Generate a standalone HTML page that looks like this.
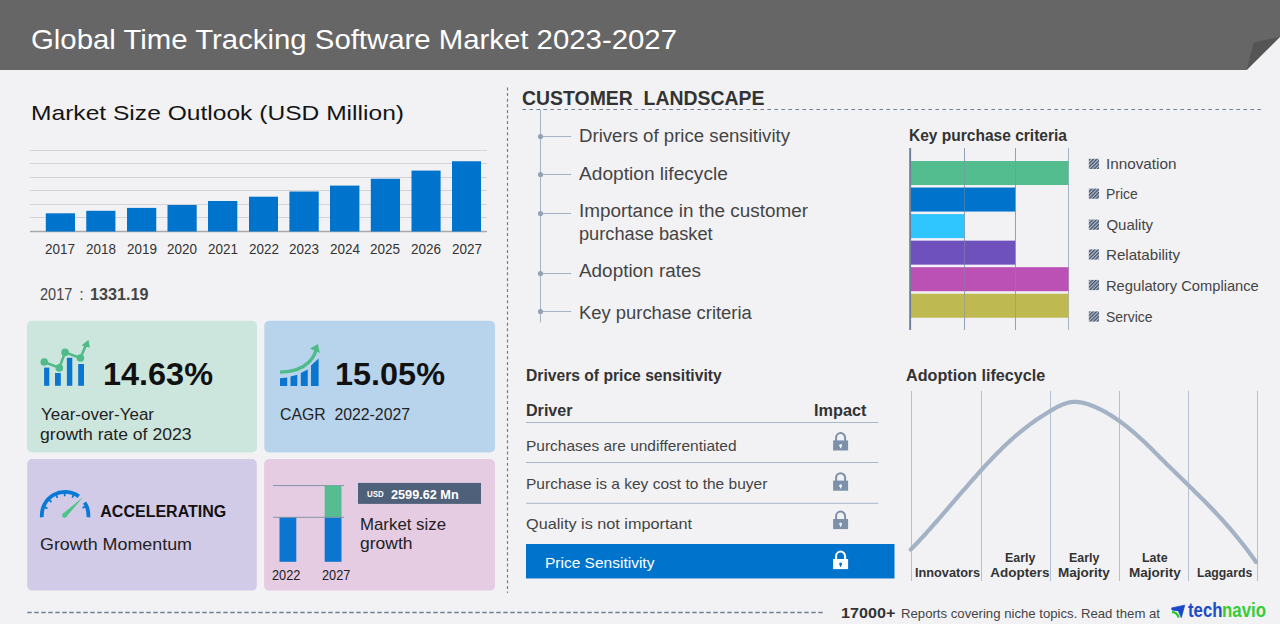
<!DOCTYPE html>
<html><head><meta charset="utf-8"><title>Global Time Tracking Software Market 2023-2027</title>
<style>
html,body{margin:0;padding:0;}
body{width:1280px;height:624px;overflow:hidden;position:relative;background:#f2f2f4;font-family:"Liberation Sans", sans-serif;}
.t{position:absolute;white-space:pre;line-height:1.117em;transform-origin:0 0;}
.a{position:absolute;}
</style></head><body>
<svg class="a" style="left:0;top:0" width="1280" height="624" viewBox="0 0 1280 624">
<defs><pattern id="hatch" patternUnits="userSpaceOnUse" width="2.5" height="2.5" patternTransform="rotate(-45)"><rect width="2.5" height="2.5" fill="#b3c3d8"/><rect width="2.5" height="1.3" fill="#434d5e"/></pattern></defs>
<polygon points="0,0 1280,0 1280,36.8 1246.6,70 0,70" fill="#666666"/>
<polygon points="1246.6,70 1253.8,42.5 1280,36.8" fill="#555555"/>
<line x1="30" y1="150.5" x2="487" y2="150.5" stroke="#d3d3d6" stroke-width="1"/>
<line x1="30" y1="163.5" x2="487" y2="163.5" stroke="#d3d3d6" stroke-width="1"/>
<line x1="30" y1="177.5" x2="487" y2="177.5" stroke="#d3d3d6" stroke-width="1"/>
<line x1="30" y1="190.5" x2="487" y2="190.5" stroke="#d3d3d6" stroke-width="1"/>
<line x1="30" y1="204.5" x2="487" y2="204.5" stroke="#d3d3d6" stroke-width="1"/>
<line x1="30" y1="217.5" x2="487" y2="217.5" stroke="#d3d3d6" stroke-width="1"/>
<line x1="30" y1="231.5" x2="487" y2="231.5" stroke="#a9a9ab" stroke-width="1.3"/>
<rect x="45.8" y="213.3" width="29.20" height="18.20" fill="#0074cc"/>
<rect x="86.25" y="210.8" width="29.15" height="20.70" fill="#0074cc"/>
<rect x="127" y="207.9" width="29.25" height="23.60" fill="#0074cc"/>
<rect x="167.5" y="205" width="29.20" height="26.50" fill="#0074cc"/>
<rect x="208" y="201" width="29.30" height="30.50" fill="#0074cc"/>
<rect x="249" y="196.7" width="29.00" height="34.80" fill="#0074cc"/>
<rect x="289.4" y="191.5" width="29.35" height="40.00" fill="#0074cc"/>
<rect x="330" y="185.6" width="29.40" height="45.90" fill="#0074cc"/>
<rect x="370.8" y="178.75" width="29.20" height="52.75" fill="#0074cc"/>
<rect x="411.5" y="170.6" width="29.10" height="60.90" fill="#0074cc"/>
<rect x="452" y="161.25" width="29.00" height="70.25" fill="#0074cc"/>
<rect x="27" y="320.8" width="230" height="131.7" rx="5" fill="#cde6dd"/>
<rect x="264.3" y="320.8" width="230.7" height="131.7" rx="5" fill="#b8d4ec"/>
<rect x="27.2" y="459" width="229.6" height="131.6" rx="5" fill="#d2cbe8"/>
<rect x="264.1" y="459" width="230.9" height="131.6" rx="5" fill="#e6cce3"/>
<rect x="44.1" y="367.6" width="5.20" height="18.20" fill="#0a76d0"/>
<rect x="55" y="373" width="5.80" height="12.80" fill="#0a76d0"/>
<rect x="66.9" y="357.8" width="5.40" height="28.00" fill="#0a76d0"/>
<rect x="78.2" y="364" width="5.80" height="21.80" fill="#0a76d0"/>
<polyline points="44.25,362 59.3,367.9 65.1,352.4 80.4,358 86,345" fill="none" stroke="#50bb8a" stroke-width="2.6" stroke-linejoin="round"/>
<circle cx="44.25" cy="362" r="3.8" fill="#50bb8a"/>
<circle cx="59.3" cy="367.9" r="3.8" fill="#50bb8a"/>
<circle cx="65.1" cy="352.4" r="3.8" fill="#50bb8a"/>
<circle cx="80.4" cy="358" r="3.8" fill="#50bb8a"/>
<polygon points="88.5,339.8 81.5,345.5 89.8,347.8" fill="#50bb8a"/>
<polygon points="280,378.2 287.2,377.6 287.2,385.9 280,385.9" fill="#0a76d0"/>
<polygon points="290.5,376.5 297.3,374.7 297.3,385.9 290.5,385.9" fill="#0a76d0"/>
<polygon points="300.8,373 307.75,369.5 307.75,385.9 300.8,385.9" fill="#0a76d0"/>
<polygon points="311,365.5 318.6,358.4 318.6,385.9 311,385.9" fill="#0a76d0"/>
<path d="M280,372.2 C292,372 303,368 309,362 C313,358 315,354 316,350" fill="none" stroke="#50bb8a" stroke-width="3.2"/>
<polygon points="317.9,344 310,348.4 319.8,353" fill="#50bb8a"/>
<path d="M41.89,517.23 A23.3,23.3 0 0 1 78.80,496.35" fill="none" stroke="#0a78d6" stroke-width="3.8"/>
<path d="M84.64,502.51 A23.3,23.3 0 0 1 88.31,517.23" fill="none" stroke="#0a78d6" stroke-width="3.8"/>
<line x1="44.28" y1="507.21" x2="47.46" y2="508.43" stroke="#0a78d6" stroke-width="1.8"/>
<line x1="49.06" y1="499.71" x2="51.50" y2="502.07" stroke="#0a78d6" stroke-width="1.8"/>
<line x1="56.03" y1="494.83" x2="57.41" y2="497.93" stroke="#0a78d6" stroke-width="1.8"/>
<line x1="64.71" y1="492.90" x2="64.77" y2="496.30" stroke="#0a78d6" stroke-width="1.8"/>
<line x1="73.63" y1="494.60" x2="72.33" y2="497.74" stroke="#0a78d6" stroke-width="1.8"/>
<line x1="85.63" y1="506.49" x2="82.50" y2="507.82" stroke="#0a78d6" stroke-width="1.8"/>
<polygon points="83.1,497.1 63,513.6 66.2,517" fill="#4fc48a"/><circle cx="64.5" cy="515.4" r="2.4" fill="#4fc48a"/>
<line x1="273" y1="485.6" x2="344" y2="485.6" stroke="#8494a8" stroke-width="1"/>
<rect x="279.5" y="517.3" width="16.8" height="44.5" fill="#0a76d0"/>
<rect x="324.7" y="485.6" width="16.8" height="31.7" fill="#55bd8f"/>
<rect x="324.7" y="517.3" width="16.8" height="44.5" fill="#0a76d0"/>
<line x1="273" y1="517.3" x2="344" y2="517.3" stroke="#8494a8" stroke-width="1"/>
<rect x="358" y="482.9" width="123" height="21" fill="#4f617a"/>
<line x1="507.5" y1="87.5" x2="507.5" y2="593" stroke="#6f7f96" stroke-width="1.2" stroke-dasharray="3 2.6"/>
<line x1="522.4" y1="109.5" x2="1262" y2="109.5" stroke="#6f7f96" stroke-width="1.2" stroke-dasharray="3.6 3.4"/>
<line x1="27.3" y1="612.5" x2="823" y2="612.5" stroke="#6f7f96" stroke-width="1.4" stroke-dasharray="4.4 2.6"/>
<line x1="540.5" y1="109.5" x2="540.5" y2="322.5" stroke="#a6b3c4" stroke-width="1"/>
<line x1="540.5" y1="136.5" x2="571.2" y2="136.5" stroke="#a6b3c4" stroke-width="1"/>
<circle cx="540.5" cy="136.5" r="2.6" fill="#94a2b6"/>
<line x1="540.5" y1="174.5" x2="571.2" y2="174.5" stroke="#a6b3c4" stroke-width="1"/>
<circle cx="540.5" cy="174.5" r="2.6" fill="#94a2b6"/>
<line x1="540.5" y1="213.5" x2="571.2" y2="213.5" stroke="#a6b3c4" stroke-width="1"/>
<circle cx="540.5" cy="213.5" r="2.6" fill="#94a2b6"/>
<line x1="540.5" y1="273.5" x2="571.2" y2="273.5" stroke="#a6b3c4" stroke-width="1"/>
<circle cx="540.5" cy="273.5" r="2.6" fill="#94a2b6"/>
<line x1="540.5" y1="311.5" x2="571.2" y2="311.5" stroke="#a6b3c4" stroke-width="1"/>
<circle cx="540.5" cy="311.5" r="2.6" fill="#94a2b6"/>
<line x1="964.5" y1="148" x2="964.5" y2="330" stroke="#a6b3c4" stroke-width="1"/>
<line x1="1015.5" y1="148" x2="1015.5" y2="330" stroke="#a6b3c4" stroke-width="1"/>
<line x1="1068.5" y1="148" x2="1068.5" y2="330" stroke="#a6b3c4" stroke-width="1"/>
<rect x="911" y="161.00" width="157.50" height="24" fill="#54bd8f"/>
<rect x="911" y="187.55" width="104.20" height="24" fill="#0074cc"/>
<rect x="911" y="214.10" width="53.40" height="24" fill="#2fc5ff"/>
<rect x="911" y="240.65" width="104.20" height="24" fill="#6f51be"/>
<rect x="911" y="267.20" width="157.50" height="24" fill="#bb50b5"/>
<rect x="911" y="293.75" width="157.50" height="24" fill="#bfb951"/>
<line x1="964.5" y1="148" x2="964.5" y2="330" stroke="#7f8fa6" stroke-width="0.9" opacity="0.55"/>
<line x1="1015.5" y1="148" x2="1015.5" y2="330" stroke="#7f8fa6" stroke-width="0.9" opacity="0.55"/>
<rect x="909.2" y="148" width="1.9" height="182" fill="#6e7f98"/>
<rect x="1088.8" y="158.8" width="10.2" height="10.2" fill="url(#hatch)"/>
<rect x="1088.8" y="188.6" width="10.2" height="10.2" fill="url(#hatch)"/>
<rect x="1088.8" y="219.6" width="10.2" height="10.2" fill="url(#hatch)"/>
<rect x="1088.8" y="249.4" width="10.2" height="10.2" fill="url(#hatch)"/>
<rect x="1088.8" y="279.9" width="10.2" height="10.2" fill="url(#hatch)"/>
<rect x="1088.8" y="311.4" width="10.2" height="10.2" fill="url(#hatch)"/>
<line x1="526" y1="422.5" x2="878.3" y2="422.5" stroke="#a9b7ca" stroke-width="1"/>
<line x1="526" y1="462.5" x2="878.3" y2="462.5" stroke="#a9b7ca" stroke-width="1"/>
<line x1="526" y1="503.3" x2="878.3" y2="503.3" stroke="#a9b7ca" stroke-width="1"/>
<rect x="526" y="544" width="368.5" height="34.5" fill="#0074cc"/>
<path d="M836.10,440.90 V437.60 A4.5,4.6 0 0 1 845.10,437.60 V440.90" fill="none" stroke="#7d90aa" stroke-width="2.0"/><rect x="833.10" y="440.40" width="15" height="10.1" fill="#7d90aa"/><circle cx="840.60" cy="445.50" r="1.5" fill="#f2f2f4"/><rect x="840.00" y="445.40" width="1.2" height="2.8" fill="#f2f2f4"/>
<path d="M836.10,481.10 V477.80 A4.5,4.6 0 0 1 845.10,477.80 V481.10" fill="none" stroke="#7d90aa" stroke-width="2.0"/><rect x="833.10" y="480.60" width="15" height="10.1" fill="#7d90aa"/><circle cx="840.60" cy="485.70" r="1.5" fill="#f2f2f4"/><rect x="840.00" y="485.60" width="1.2" height="2.8" fill="#f2f2f4"/>
<path d="M836.10,519.50 V516.20 A4.5,4.6 0 0 1 845.10,516.20 V519.50" fill="none" stroke="#7d90aa" stroke-width="2.0"/><rect x="833.10" y="519.00" width="15" height="10.1" fill="#7d90aa"/><circle cx="840.60" cy="524.10" r="1.5" fill="#f2f2f4"/><rect x="840.00" y="524.00" width="1.2" height="2.8" fill="#f2f2f4"/>
<path d="M836.10,559.50 V556.20 A4.5,4.6 0 0 1 845.10,556.20 V559.50" fill="none" stroke="#ffffff" stroke-width="2.0"/><rect x="833.10" y="559.00" width="15" height="10.1" fill="#ffffff"/><circle cx="840.60" cy="564.10" r="1.5" fill="#0074cc"/><rect x="840.00" y="564.00" width="1.2" height="2.8" fill="#0074cc"/>
<line x1="911.5" y1="390.8" x2="911.5" y2="581" stroke="#b5c1d0" stroke-width="1"/>
<line x1="981.5" y1="390.8" x2="981.5" y2="581" stroke="#b5c1d0" stroke-width="1"/>
<line x1="1050.5" y1="390.8" x2="1050.5" y2="581" stroke="#b5c1d0" stroke-width="1"/>
<line x1="1119.5" y1="390.8" x2="1119.5" y2="581" stroke="#b5c1d0" stroke-width="1"/>
<line x1="1188.5" y1="390.8" x2="1188.5" y2="581" stroke="#b5c1d0" stroke-width="1"/>
<line x1="1257.5" y1="390.8" x2="1257.5" y2="581" stroke="#b5c1d0" stroke-width="1"/>
<path d="M910.80,549.55 L912.73,547.57 L914.66,545.56 L916.59,543.54 L918.51,541.49 L920.44,539.42 L922.37,537.33 L924.30,535.22 L926.23,533.10 L928.16,530.96 L930.08,528.80 L932.01,526.63 L933.94,524.45 L935.87,522.26 L937.80,520.05 L939.73,517.84 L941.66,515.62 L943.58,513.39 L945.51,511.16 L947.44,508.92 L949.37,506.68 L951.30,504.44 L953.23,502.19 L955.16,499.95 L957.08,497.70 L959.01,495.46 L960.94,493.22 L962.87,490.99 L964.80,488.76 L966.73,486.54 L968.65,484.33 L970.58,482.12 L972.51,479.93 L974.44,477.74 L976.37,475.57 L978.30,473.42 L980.23,471.27 L982.15,469.15 L984.08,467.04 L986.01,464.94 L987.94,462.87 L989.87,460.82 L991.80,458.79 L993.73,456.78 L995.65,454.80 L997.58,452.84 L999.51,450.91 L1001.44,449.00 L1003.37,447.12 L1005.30,445.27 L1007.22,443.46 L1009.15,441.67 L1011.08,439.92 L1013.01,438.20 L1014.94,436.51 L1016.87,434.86 L1018.80,433.24 L1020.72,431.65 L1022.65,430.09 L1024.58,428.57 L1026.51,427.07 L1028.44,425.60 L1030.37,424.17 L1032.29,422.76 L1034.22,421.38 L1036.15,420.03 L1038.08,418.70 L1040.01,417.41 L1041.94,416.14 L1043.87,414.90 L1045.79,413.68 L1047.72,412.49 L1049.65,411.32 L1051.58,410.18 L1053.51,409.07 L1055.44,407.99 L1057.37,406.98 L1059.29,406.02 L1061.22,405.14 L1063.15,404.33 L1065.08,403.63 L1067.01,403.02 L1068.94,402.53 L1070.86,402.17 L1072.79,401.94 L1074.72,401.85 L1076.65,401.89 L1078.58,402.05 L1080.51,402.31 L1082.44,402.68 L1084.36,403.14 L1086.29,403.69 L1088.22,404.30 L1090.15,404.99 L1092.08,405.72 L1094.01,406.51 L1095.94,407.34 L1097.86,408.22 L1099.79,409.14 L1101.72,410.11 L1103.65,411.13 L1105.58,412.19 L1107.51,413.29 L1109.43,414.44 L1111.36,415.63 L1113.29,416.86 L1115.22,418.14 L1117.15,419.45 L1119.08,420.81 L1121.01,422.21 L1122.93,423.65 L1124.86,425.12 L1126.79,426.64 L1128.72,428.19 L1130.65,429.77 L1132.58,431.39 L1134.51,433.05 L1136.43,434.73 L1138.36,436.45 L1140.29,438.20 L1142.22,439.98 L1144.15,441.79 L1146.08,443.62 L1148.00,445.48 L1149.93,447.37 L1151.86,449.27 L1153.79,451.18 L1155.72,453.11 L1157.65,455.04 L1159.58,456.98 L1161.50,458.91 L1163.43,460.84 L1165.36,462.76 L1167.29,464.67 L1169.22,466.57 L1171.15,468.47 L1173.07,470.35 L1175.00,472.23 L1176.93,474.11 L1178.86,475.98 L1180.79,477.85 L1182.72,479.72 L1184.65,481.59 L1186.57,483.46 L1188.50,485.34 L1190.43,487.22 L1192.36,489.10 L1194.29,490.99 L1196.22,492.88 L1198.15,494.79 L1200.07,496.70 L1202.00,498.63 L1203.93,500.57 L1205.86,502.52 L1207.79,504.49 L1209.72,506.47 L1211.64,508.47 L1213.57,510.49 L1215.50,512.53 L1217.43,514.59 L1219.36,516.67 L1221.29,518.77 L1223.22,520.90 L1225.14,523.06 L1227.07,525.24 L1229.00,527.45 L1230.93,529.69 L1232.86,531.96 L1234.79,534.26 L1236.72,536.59 L1238.64,538.96 L1240.57,541.36 L1242.50,543.80 L1244.43,546.28 L1246.36,548.80 L1248.29,551.35 L1250.21,553.95 L1252.14,556.59 L1254.07,559.28 L1256.00,562.01" fill="none" stroke="#a3b2c5" stroke-width="4.2" stroke-linecap="round" stroke-linejoin="round"/>
<path d="M1171.7,607.9 L1184.7,605.2 L1181.3,617.6 L1178.4,610.9 L1171.9,609.9 Z" fill="#1a47c8" stroke="#1a47c8" stroke-width="0.8" stroke-linejoin="round"/>
<path d="M1172,611.8 Q1177.6,612.4 1178.6,617.6" fill="none" stroke="#25c92a" stroke-width="2.2"/>
</svg>
<div class="t" style="left:31.00px;top:25.46px;font-size:27.5px;color:#ffffff;transform:scaleX(1.0672);">Global Time Tracking Software Market 2023-2027</div>
<div class="t" style="left:31.00px;top:100.80px;font-size:21px;color:#151515;transform:scaleX(1.1708);">Market Size Outlook (USD Million)</div>
<div class="t" style="left:45.40px;top:242.03px;font-size:14px;color:#333;transform:scaleX(0.9629);">2017</div>
<div class="t" style="left:85.83px;top:242.03px;font-size:14px;color:#333;transform:scaleX(0.9629);">2018</div>
<div class="t" style="left:126.62px;top:242.03px;font-size:14px;color:#333;transform:scaleX(0.9629);">2019</div>
<div class="t" style="left:167.10px;top:242.03px;font-size:14px;color:#333;transform:scaleX(0.9629);">2020</div>
<div class="t" style="left:207.65px;top:242.03px;font-size:14px;color:#333;transform:scaleX(0.9629);">2021</div>
<div class="t" style="left:248.50px;top:242.03px;font-size:14px;color:#333;transform:scaleX(0.9629);">2022</div>
<div class="t" style="left:289.07px;top:242.03px;font-size:14px;color:#333;transform:scaleX(0.9629);">2023</div>
<div class="t" style="left:329.70px;top:242.03px;font-size:14px;color:#333;transform:scaleX(0.9629);">2024</div>
<div class="t" style="left:370.40px;top:242.03px;font-size:14px;color:#333;transform:scaleX(0.9629);">2025</div>
<div class="t" style="left:411.05px;top:242.03px;font-size:14px;color:#333;transform:scaleX(0.9629);">2026</div>
<div class="t" style="left:451.50px;top:242.03px;font-size:14px;color:#333;transform:scaleX(0.9629);">2027</div>
<div class="t" style="left:40.40px;top:286.32px;font-size:16px;color:#444;transform:scaleX(0.9075);">2017</div>
<div class="t" style="left:79.30px;top:286.32px;font-size:16px;color:#444;">:</div>
<div class="t" style="left:90.30px;top:286.32px;font-size:16px;color:#444;font-weight:700;transform:scaleX(1.0096);">1331.19</div>
<div class="t" style="left:103.20px;top:356.64px;font-size:32px;color:#111;font-weight:700;transform:scaleX(1.0135);">14.63%</div>
<div class="t" style="left:40.50px;top:405.72px;font-size:16px;color:#222;transform:scaleX(1.0617);">Year-over-Year</div>
<div class="t" style="left:40.30px;top:425.52px;font-size:16px;color:#222;transform:scaleX(1.0988);">growth rate of 2023</div>
<div class="t" style="left:334.60px;top:356.64px;font-size:32px;color:#111;font-weight:700;transform:scaleX(1.0135);">15.05%</div>
<div class="t" style="left:280.00px;top:406.12px;font-size:16px;color:#222;transform:scaleX(0.9875);">CAGR  2022-2027</div>
<div class="t" style="left:100.30px;top:502.92px;font-size:16px;color:#111;font-weight:700;">ACCELERATING</div>
<div class="t" style="left:39.90px;top:535.92px;font-size:16px;color:#222;transform:scaleX(1.1173);">Growth Momentum</div>
<div class="t" style="left:272.30px;top:567.73px;font-size:14px;color:#222;transform:scaleX(0.9115);">2022</div>
<div class="t" style="left:322.30px;top:567.73px;font-size:14px;color:#222;transform:scaleX(0.9115);">2027</div>
<div class="t" style="left:367.30px;top:489.20px;font-size:9.5px;color:#ffffff;font-weight:700;transform:scaleX(0.8274);">USD</div>
<div class="t" style="left:390.50px;top:489.04px;font-size:12px;color:#ffffff;font-weight:700;transform:scaleX(1.0570);">2599.62 Mn</div>
<div class="t" style="left:359.80px;top:515.01px;font-size:17px;color:#222;transform:scaleX(0.9894);">Market size</div>
<div class="t" style="left:359.80px;top:534.22px;font-size:17px;color:#222;transform:scaleX(1.0288);">growth</div>
<div class="t" style="left:522.30px;top:88.35px;font-size:19.5px;color:#333;font-weight:700;transform:scaleX(0.9962);">CUSTOMER  LANDSCAPE</div>
<div class="t" style="left:579.40px;top:126.31px;font-size:18px;color:#444;transform:scaleX(1.0341);">Drivers of price sensitivity</div>
<div class="t" style="left:579.40px;top:164.31px;font-size:18px;color:#444;transform:scaleX(1.0629);">Adoption lifecycle</div>
<div class="t" style="left:579.40px;top:201.31px;font-size:18px;color:#444;transform:scaleX(1.0499);">Importance in the customer</div>
<div class="t" style="left:579.40px;top:223.51px;font-size:18px;color:#444;transform:scaleX(1.0114);">purchase basket</div>
<div class="t" style="left:579.40px;top:261.31px;font-size:18px;color:#444;transform:scaleX(1.0502);">Adoption rates</div>
<div class="t" style="left:579.40px;top:302.81px;font-size:18px;color:#444;transform:scaleX(1.0220);">Key purchase criteria</div>
<div class="t" style="left:909.20px;top:126.62px;font-size:16px;color:#333;font-weight:700;transform:scaleX(0.9708);">Key purchase criteria</div>
<div class="t" style="left:1106.40px;top:156.43px;font-size:15px;color:#444;transform:scaleX(1.0183);">Innovation</div>
<div class="t" style="left:1106.40px;top:186.22px;font-size:15px;color:#444;transform:scaleX(0.9272);">Price</div>
<div class="t" style="left:1106.40px;top:217.22px;font-size:15px;color:#444;">Quality</div>
<div class="t" style="left:1106.40px;top:247.03px;font-size:15px;color:#444;transform:scaleX(1.0085);">Relatability</div>
<div class="t" style="left:1106.40px;top:277.53px;font-size:15px;color:#444;transform:scaleX(0.9800);">Regulatory Compliance</div>
<div class="t" style="left:1106.40px;top:309.03px;font-size:15px;color:#444;transform:scaleX(0.9314);">Service</div>
<div class="t" style="left:526.30px;top:366.72px;font-size:16px;color:#333;font-weight:700;transform:scaleX(0.9780);">Drivers of price sensitivity</div>
<div class="t" style="left:526.30px;top:402.12px;font-size:16px;color:#333;font-weight:700;transform:scaleX(1.0054);">Driver</div>
<div class="t" style="left:813.60px;top:402.12px;font-size:16px;color:#333;font-weight:700;transform:scaleX(1.0159);">Impact</div>
<div class="t" style="left:526.30px;top:438.03px;font-size:15px;color:#444;transform:scaleX(1.0322);">Purchases are undifferentiated</div>
<div class="t" style="left:526.30px;top:476.43px;font-size:15px;color:#444;transform:scaleX(1.0336);">Purchase is a key cost to the buyer</div>
<div class="t" style="left:526.30px;top:516.02px;font-size:15px;color:#444;transform:scaleX(1.0821);">Quality is not important</div>
<div class="t" style="left:545.10px;top:554.73px;font-size:15px;color:#ffffff;transform:scaleX(1.0333);">Price Sensitivity</div>
<div class="t" style="left:906.30px;top:366.72px;font-size:16px;color:#333;font-weight:700;transform:scaleX(1.0102);">Adoption lifecycle</div>
<div class="t" style="left:914.60px;top:565.38px;font-size:13.5px;color:#333;font-weight:700;transform:scaleX(0.9433);">Innovators</div>
<div class="t" style="left:1004.81px;top:549.78px;font-size:13.5px;color:#333;font-weight:700;transform:scaleX(0.9200);">Early</div>
<div class="t" style="left:990.37px;top:565.38px;font-size:13.5px;color:#333;font-weight:700;">Adopters</div>
<div class="t" style="left:1068.81px;top:549.78px;font-size:13.5px;color:#333;font-weight:700;transform:scaleX(0.9200);">Early</div>
<div class="t" style="left:1058.12px;top:565.38px;font-size:13.5px;color:#333;font-weight:700;">Majority</div>
<div class="t" style="left:1142.23px;top:549.78px;font-size:13.5px;color:#333;font-weight:700;transform:scaleX(0.9200);">Late</div>
<div class="t" style="left:1129.12px;top:565.38px;font-size:13.5px;color:#333;font-weight:700;">Majority</div>
<div class="t" style="left:1197.25px;top:565.38px;font-size:13.5px;color:#333;font-weight:700;transform:scaleX(0.9100);">Laggards</div>
<div class="t" style="left:840.50px;top:605.02px;font-size:15px;color:#333;font-weight:700;transform:scaleX(1.0776);">17000+</div>
<div class="t" style="left:901.00px;top:606.38px;font-size:13.5px;color:#444;transform:scaleX(0.9750);">Reports covering niche topics. Read them at</div>
<div class="t" style="left:1187.50px;top:600.45px;font-size:19.5px;color:#1d4cc9;font-weight:700;transform:scaleX(0.8601);">tech</div>
<div class="t" style="left:1222.00px;top:600.45px;font-size:19.5px;color:#38cc38;font-weight:700;transform:scaleX(0.8638);">navio</div>
</body></html>
